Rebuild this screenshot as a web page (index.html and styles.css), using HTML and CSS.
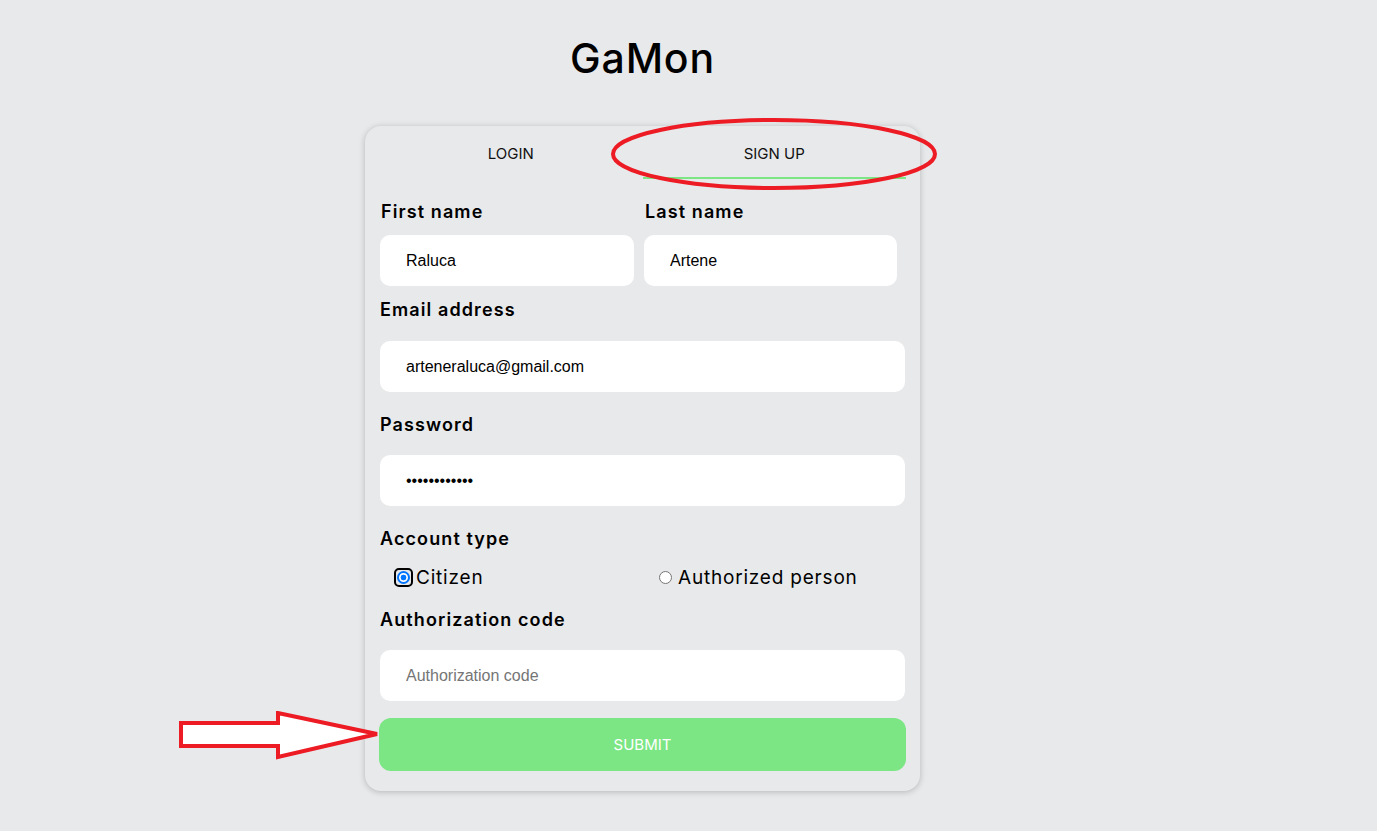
FILE: index.html
```html
<!DOCTYPE html>
<html lang="en">
<head>
<meta charset="utf-8">
<title>GaMon - Sign up</title>
<link rel="stylesheet" href="styles.css">
</head>
<body>
<div class="page">
  <h1 class="title">GaMon</h1>
  <div class="card">
    <div class="tabs">
      <div class="tab">LOGIN</div>
      <div class="tab active">SIGN UP</div>
    </div>
    <form class="form">
      <div class="name-row">
        <div class="field">
          <label class="label">First name</label>
          <input class="input" type="text" value="Raluca">
        </div>
        <div class="field">
          <label class="label">Last name</label>
          <input class="input" type="text" value="Artene">
        </div>
      </div>
      <label class="label label-email">Email address</label>
      <input class="input wide" type="email" value="arteneraluca@gmail.com">
      <label class="label label-section">Password</label>
      <input class="input wide" type="password" value="raluca123456">
      <label class="label label-account">Account type</label>
      <div class="radio-row">
        <label class="radio-opt"><span class="radio-ring focused"><input class="radio" type="radio" name="acc" checked></span><span>Citizen</span></label>
        <label class="radio-opt"><span class="radio-ring"><input class="radio" type="radio" name="acc"></span><span>Authorized person</span></label>
      </div>
      <label class="label label-code">Authorization code</label>
      <input class="input wide" type="text" placeholder="Authorization code">
      <button class="submit" type="button">SUBMIT</button>
    </form>
  </div>
  <svg class="ellipse-mark" width="340" height="80" viewBox="0 0 340 80">
    <ellipse cx="165" cy="37" rx="161" ry="34" fill="none" stroke="#ed1c24" stroke-width="4"/>
  </svg>
  <svg class="arrow-mark" width="210" height="54" viewBox="0 0 210 54">
    <polygon points="3,12 100,12 100,2 199,23 100,46 100,35 3,35" fill="#fff" stroke="#ed1c24" stroke-width="4" stroke-linejoin="miter"/>
  </svg>
</div>
</body>
</html>
```

FILE: styles.css
```css
* { box-sizing: border-box; }
html, body { margin: 0; padding: 0; }
body {
  background: #e8e9eb;
  font-family: "Inter", "Liberation Sans", sans-serif;
  color: #000;
}
.page {
  position: relative;
  width: 1285px;
  min-height: 831px;
  display: flex;
  flex-direction: column;
  align-items: center;
}
.title {
  margin: 26px 0 0;
  font-size: 41px;
  font-weight: 500;
  line-height: 64px;
  letter-spacing: 0.8px;
}
.card {
  margin-top: 36px;
  width: 555px;
  padding: 0 14px 20px;
  border-radius: 16px;
  background: #e8e9eb;
  box-shadow: 0 1px 6px rgba(0,0,0,0.22);
}
.tabs {
  display: grid;
  grid-template-columns: 1fr 1fr;
}
.tab {
  height: 53px;
  padding-top: 4px;
  display: flex;
  align-items: center;
  justify-content: center;
  font-size: 15px;
  color: #111;
  border-bottom: 2px solid transparent;
}
.tab.active { border-bottom-color: #7ce685; }
.form {
  display: flex;
  flex-direction: column;
  padding-top: 19px;
}
.name-row {
  display: grid;
  grid-template-columns: 254px 253px;
  column-gap: 10px;
  padding-left: 1px;
}
.field { display: flex; flex-direction: column; }
.label {
  display: block;
  font-size: 18px;
  font-weight: 600;
  line-height: 27px;
  letter-spacing: 1.1px;
  padding-left: 1px;
}
.name-row .label { margin-bottom: 10px; }
.label-email { margin: 10px 0 18px; }
.label-section { margin: 19px 0 17px; }
.label-account { margin-top: 19px; }
.label-code { margin-bottom: 17px; }
.input {
  height: 51px;
  border: none;
  border-radius: 10px;
  background: #fff;
  padding: 0 26px;
  font-family: "Liberation Sans", Arial, sans-serif;
  font-size: 16px;
  color: #000;
  outline: none;
}
.input::placeholder { color: #757575; }
.input.wide { width: 525px; margin-left: 1px; }
.radio-row {
  display: grid;
  grid-template-columns: 262px 1fr;
  height: 30px;
  margin: 10px 0 14px;
}
.radio-opt {
  display: flex;
  align-items: center;
  gap: 3px;
  padding-left: 15px;
  font-size: 19px;
  font-weight: 400;
  letter-spacing: 0.8px;
}
.radio-ring {
  display: flex;
  padding: 1px;
  border: 2px solid transparent;
  border-radius: 5px;
}
.radio-ring.focused { border-color: #000; }
.radio {
  -webkit-appearance: none;
  appearance: none;
  margin: 0;
  width: 13px;
  height: 13px;
  border-radius: 50%;
  border: 1px solid #767676;
  background: #fff;
}
.radio:checked {
  border: 2px solid #0075ff;
  background: radial-gradient(circle, #0075ff 0 2.6px, #fff 3.2px);
}
.submit {
  margin-top: 17px;
  height: 53px;
  border: none;
  border-radius: 12px;
  background: #7ce685;
  color: #fff;
  font-family: "Inter", "Liberation Sans", sans-serif;
  font-size: 15px;
}
.ellipse-mark {
  position: absolute;
  left: 609px;
  top: 117px;
}
.arrow-mark {
  position: absolute;
  left: 178px;
  top: 711px;
}
```
